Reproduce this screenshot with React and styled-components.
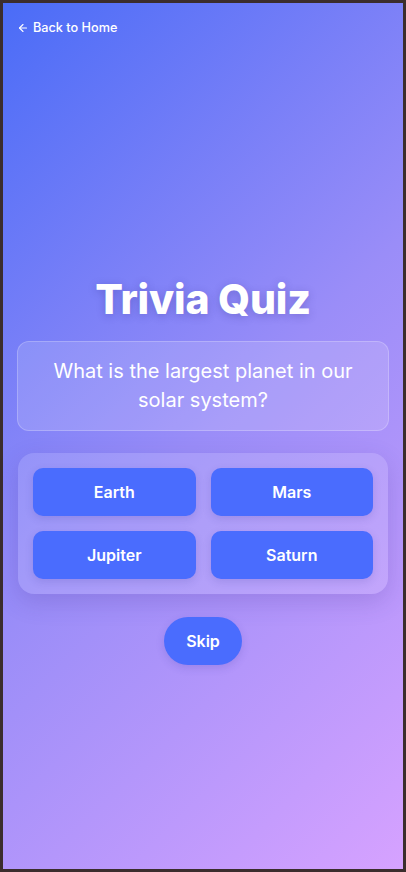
import React from "react";
import styled, { createGlobalStyle } from "styled-components";
import { ArrowLeft } from "lucide-react";

const GlobalStyle = createGlobalStyle`
  * {
    box-sizing: border-box;
  }
  body {
    margin: 0;
    background: #3b2d2d;
    font-family: Inter, "Noto Sans", sans-serif;
  }
`;

const options = ["Earth", "Mars", "Jupiter", "Saturn"];

const App = () => {
  return (
    <>
      <GlobalStyle />
      <Frame>
        <Page>
          <BackLink href="#">
            <ArrowLeft size={12} strokeWidth={2.25} />
            Back to Home
          </BackLink>
          <Main>
            <Title>Trivia Quiz</Title>
            <QuestionCard>
              What is the largest planet in our solar system?
            </QuestionCard>
            <OptionsPanel>
              {options.map((option) => (
                <OptionButton key={option}>{option}</OptionButton>
              ))}
            </OptionsPanel>
            <SkipButton>Skip</SkipButton>
          </Main>
        </Page>
      </Frame>
    </>
  );
};

export default App;

const Frame = styled.div`
  height: 872px;
  padding: 3px;
  background: #3b2d2d;
`;

const Page = styled.div`
  height: 100%;
  display: flex;
  flex-direction: column;
  padding: 19px 14px 18px;
  background: linear-gradient(135deg, #4a6cf7 0%, #9a8df8 50%, #d6a2ff 100%);
  color: white;
`;

const BackLink = styled.a`
  display: inline-flex;
  align-items: center;
  gap: 4px;
  align-self: flex-start;
  color: white;
  font-size: 12.7px;
  font-weight: 500;
  text-decoration: none;
  line-height: 12px;
`;

const Main = styled.main`
  flex: 1;
  display: flex;
  flex-direction: column;
  align-items: center;
  padding-top: 243px;
`;

const Title = styled.h1`
  margin: 0 0 20px;
  font-size: 41px;
  font-weight: 800;
  line-height: 44px;
  letter-spacing: -0.2px;
  text-shadow: 0 2px 8px rgba(40, 30, 120, 0.25);
`;

const QuestionCard = styled.div`
  width: 100%;
  padding: 15px 28px;
  border-radius: 12px;
  border: 1px solid rgba(255, 255, 255, 0.22);
  background: rgba(255, 255, 255, 0.14);
  text-align: center;
  font-size: 20px;
  line-height: 29px;
  font-weight: 400;
`;

const OptionsPanel = styled.div`
  width: calc(100% - 2px);
  margin-top: 22px;
  display: grid;
  grid-template-columns: 1fr 1fr;
  gap: 15px;
  padding: 15px;
  border-radius: 16px;
  background: rgba(255, 255, 255, 0.13);
  box-shadow: 0 8px 24px rgba(60, 40, 140, 0.18);
`;

const OptionButton = styled.button`
  height: 48px;
  border: none;
  border-radius: 10px;
  background: #4a6cfe;
  color: white;
  font-family: Inter, sans-serif;
  font-size: 16px;
  font-weight: 600;
  box-shadow: 0 3px 8px rgba(40, 40, 140, 0.15);
  cursor: pointer;
`;

const SkipButton = styled.button`
  margin-top: 23px;
  width: 78px;
  height: 48px;
  border: none;
  border-radius: 24px;
  background: #4a6cfe;
  color: white;
  font-family: Inter, sans-serif;
  font-size: 16px;
  font-weight: 600;
  box-shadow: 0 3px 8px rgba(40, 40, 140, 0.15);
  cursor: pointer;
`;
